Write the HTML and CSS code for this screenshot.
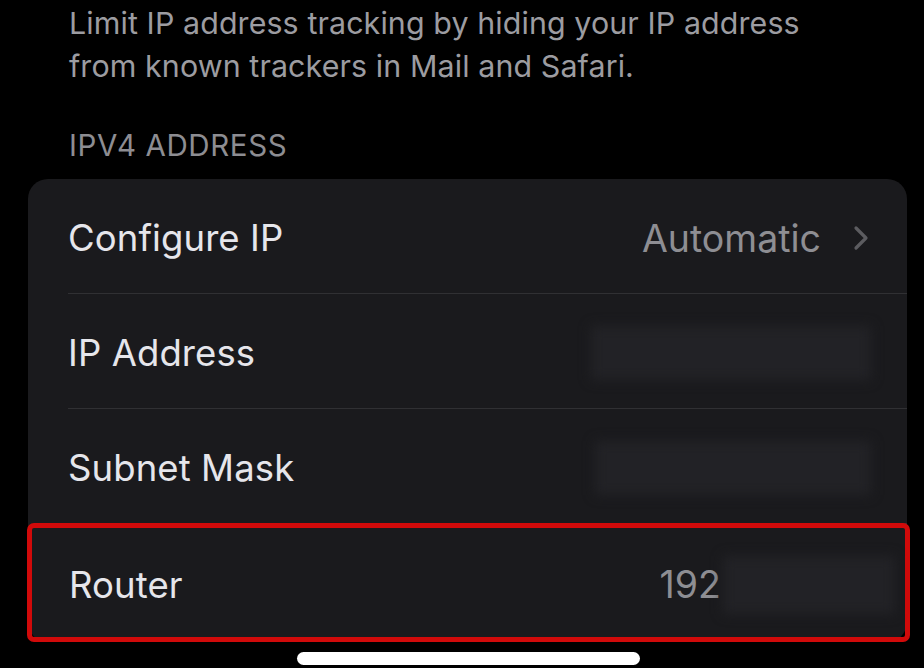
FILE: index.html
```html
<!DOCTYPE html>
<html>
<head>
<meta charset="utf-8">
<link rel="stylesheet" href="styles.css">
</head>
<body>
<div class="page">
  <p class="desc">Limit IP address tracking by hiding your IP address<br>from known trackers in Mail and Safari.</p>
  <div class="section-header">IPV4 ADDRESS</div>
  <div class="card">
    <div class="row">
      <span class="label">Configure IP</span>
      <span class="value">Automatic
        <svg class="chev" width="16" height="26" viewBox="0 0 16 26"><path d="M3 3 L13 13 L3 23" fill="none" stroke="#5c5c60" stroke-width="3.2" stroke-linecap="round" stroke-linejoin="round"/></svg>
      </span>
    </div>
    <div class="row">
      <span class="label">IP Address</span>
      <span class="blur blur-ip"></span>
    </div>
    <div class="row">
      <span class="label">Subnet Mask</span>
      <span class="blur blur-mask"></span>
    </div>
    <div class="row row-router">
      <span class="label">Router</span>
      <span class="value router-value">192<span class="blur blur-router"></span></span>
    </div>
  </div>
  <div class="home-bar"></div>
</div>
</body>
</html>
```

FILE: styles.css
```css
html, body {
  margin: 0;
  padding: 0;
  background: #000;
}
body {
  width: 924px;
  height: 668px;
  overflow: hidden;
  font-family: Inter, "Noto Sans", sans-serif;
}
.page {
  display: block;
}
.desc {
  margin: 0;
  padding: 2px 0 0 69px;
  color: #9c9ca1;
  font-size: 30.4px;
  line-height: 43px;
  letter-spacing: 0.1px;
}
.section-header {
  padding: 39px 0 0 69px;
  color: #8d8d92;
  font-size: 29.5px;
  line-height: 36px;
  letter-spacing: 0.6px;
  height: 36px;
  margin-bottom: 16px;
}
.card {
  margin: 0 17px 0 28px;
  background: #1a1a1d;
  border-radius: 20px;
  display: flex;
  flex-direction: column;
}
.row {
  flex-shrink: 0;
  height: 115px;
  margin-left: 40px;
  padding-right: 40px;
  padding-top: 4px;
  display: flex;
  align-items: center;
  justify-content: space-between;
  border-bottom: 1.5px solid #303033;
  box-sizing: border-box;
}
.label {
  color: #e6e6eb;
  font-size: 36.5px;
  letter-spacing: 0.1px;
}
.value {
  color: #8e8e93;
  font-size: 37.5px;
  display: flex;
  align-items: center;
  gap: 32px;
}
.chev {
  margin-right: -2px;
}
.blur {
  display: block;
  background: #222226;
  filter: blur(6px);
}
.blur-ip {
  width: 280px;
  height: 54px;
  margin-right: -4px;
}
.blur-mask {
  width: 276px;
  height: 54px;
  margin-right: -4px;
}
.row-router {
  margin: -1px -3px 0 -1px;
  padding-left: 37px;
  padding-right: 10px;
  padding-top: 4px;
  height: 119px;
  border: 5px solid #d10a0a;
  border-radius: 7px;
}
.router-value {
  gap: 2px;
}
.blur-router {
  width: 172px;
  height: 58px;
}
.home-bar {
  margin: 10px 0 0 297px;
  width: 343px;
  height: 13px;
  background: #fff;
  border-radius: 7px;
}
```
